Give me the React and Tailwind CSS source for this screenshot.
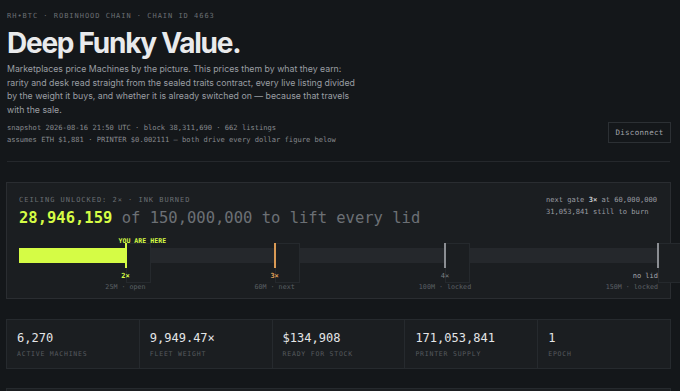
import React from 'react';

const mono = { fontFamily: '"DejaVu Sans Mono", "Liberation Mono", monospace' };

const markers = [
  { at: 25, label: '2×', sub: '25M · open', line: 'bg-[#d5fc45]', text: 'text-[#d5fc45] font-bold' },
  { at: 60, label: '3×', sub: '60M · next', line: 'bg-[#d99a55]', text: 'text-[#d99a55] font-bold' },
  { at: 100, label: '4×', sub: '100M · locked', line: 'bg-[#8b8e93]', text: 'text-[#7d8085]' },
  { at: 150, label: 'no lid', sub: '150M · locked', line: 'bg-[#8b8e93]', text: 'text-[#a5a8ad]', last: true },
];

const stats = [
  { value: '6,270', label: 'ACTIVE MACHINES' },
  { value: '9,949.47×', label: 'FLEET WEIGHT' },
  { value: '$134,908', label: 'READY FOR STOCK' },
  { value: '171,053,841', label: 'PRINTER SUPPLY' },
  { value: '1', label: 'EPOCH' },
];

const Marker = ({ m }) => {
  const left = `${(m.at / 150) * 100}%`;
  return (
    <div className="absolute top-0" style={{ left }}>
      <div className="absolute top-[7px] left-0 w-[25px] h-[40px] bg-[#1b1e21] border border-[#25292d]" />
      <div className={`absolute top-[7px] -left-px w-[2px] h-[25px] ${m.line}`} />
      <div className={`absolute top-[36px] ${m.last ? 'right-0' : '-translate-x-1/2'} text-[7px] leading-[8px] whitespace-nowrap ${m.text}`}>
        {m.label}
      </div>
      <div className={`absolute top-[47px] ${m.last ? 'right-0' : '-translate-x-1/2'} text-[6.7px] leading-[8px] whitespace-nowrap text-[#5c6065]`}>
        {m.sub}
      </div>
    </div>
  );
};

export default function App() {
  const burned = 28946159;
  const here = `${(burned / 150000000) * 100}%`;

  return (
    <div className="min-h-screen bg-[#14171a] overflow-hidden" style={{ fontFamily: 'Inter, "Liberation Sans", sans-serif' }}>
      <div className="w-[665px] ml-[6px]">
        {/* header */}
        <div className="flex items-end justify-between">
          <div className="pl-px">
            <div className="pt-[11px] text-[7px] leading-[10px] tracking-[0.14em] text-[#6a6e73]" style={mono}>
              RH•BTC · ROBINHOOD CHAIN · CHAIN ID 4663
            </div>
            <h1 className="mt-[8px] text-[28px] leading-[28px] font-bold tracking-[-0.045em] text-[#e9eaec]">
              Deep Funky Value.
            </h1>
            <p className="mt-[6px] max-w-[350px] text-[8.75px] leading-[13.5px] text-[#9a9ea3]">
              Marketplaces price Machines by the picture. This prices them by what they earn: rarity and desk read straight from the sealed traits contract, every live listing divided by the weight it buys, and whether it is already switched on — because that travels with the sale.
            </p>
            <div className="mt-[5px] text-[7.1px] leading-[12px] text-[#878a8f]" style={mono}>
              <div>snapshot 2026-08-16 21:50 UTC · block 38,311,690 · 662 listings</div>
              <div>assumes ETH $1,881 · PRINTER $0.002111 — both drive every dollar figure below</div>
            </div>
          </div>
          <button className="mb-[3px] h-[21px] w-[63px] border border-[#2c3034] text-[7.5px] tracking-[0.04em] text-[#a3a6ab]" style={mono}>
            Disconnect
          </button>
        </div>

        <div className="mt-[15px] ml-px mr-px border-t border-[#25282c]" />

        {/* burn panel */}
        <div className="mt-[20px] bg-[#1b1e21] border border-[#2a2d31] px-[12px] pt-[13px] pb-[6px]" style={mono}>
          <div className="flex justify-between items-start">
            <div>
              <div className="text-[7px] leading-[8px] tracking-[0.14em] text-[#6a6e73]">
                CEILING UNLOCKED: 2× · INK BURNED
              </div>
              <div className="mt-[4px] text-[15.5px] leading-[20px] whitespace-nowrap">
                <span className="font-bold text-[#d5fc45]">28,946,159</span>
                <span className="text-[#6c7075]"> of 150,000,000 to lift every lid</span>
              </div>
            </div>
            <div className="-mt-[2px] mr-[1px] text-[7.1px] leading-[12px] text-[#9a9da2]">
              <div>next gate <span className="font-bold text-[#c9cbcf]">3×</span> at 60,000,000</div>
              <div>31,053,841 still to burn</div>
            </div>
          </div>

          <div className="relative mt-[8px] h-[56px]">
            <div className="absolute top-[1px] -translate-x-1/2 text-[6.5px] leading-[8px] font-bold tracking-[0.01em] text-[#d5fc45] whitespace-nowrap" style={{ left: here }}>
              YOU ARE HERE
            </div>
            <div className="absolute top-[12px] left-0 right-0 h-[15px] bg-[#25282c]">
              <div className="h-full bg-[#d5fc45]" style={{ width: `${(25 / 150) * 100}%` }} />
            </div>
            {markers.map((m) => (
              <Marker key={m.sub} m={m} />
            ))}
          </div>
        </div>

        {/* stats */}
        <div className="mt-[20px] grid grid-cols-5 gap-px bg-[#262a2e] border border-[#262a2e]" style={mono}>
          {stats.map((s) => (
            <div key={s.label} className="bg-[#1b1e21] h-[48px] px-[10px] pt-[11px]">
              <div className="text-[12px] leading-[14px] text-[#e4e5e7]">{s.value}</div>
              <div className="mt-[5px] text-[6.5px] leading-[8px] tracking-[0.12em] text-[#565a5f]">{s.label}</div>
            </div>
          ))}
        </div>

        <div className="mt-[19px] h-[40px] bg-[#1b1e21] border border-[#262a2e]" />
      </div>
    </div>
  );
}
